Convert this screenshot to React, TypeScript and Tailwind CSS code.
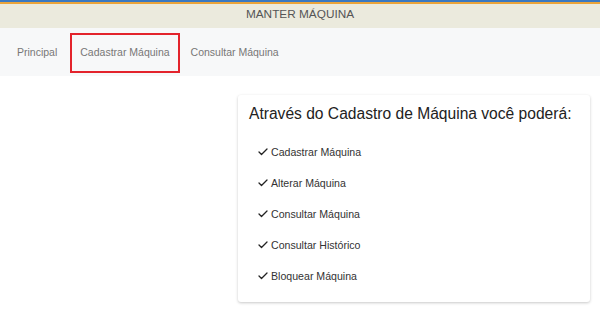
import { Check } from 'lucide-react';

const items = [
  'Cadastrar Máquina',
  'Alterar Máquina',
  'Consultar Máquina',
  'Consultar Histórico',
  'Bloquear Máquina',
];

export default function App() {
  return (
    <div className="w-[600px] h-[312px] bg-white overflow-hidden font-['Liberation_Sans',Arial,sans-serif]">
      {/* top stripes */}
      <div className="h-[2px] bg-[#3a78c0]" />
      <div className="h-[2px] bg-[#eaa43a]" />

      {/* title bar */}
      <div className="h-[24px] bg-[#ebeadd] flex items-center justify-center">
        <span className="text-[11.8px] text-[#555] -mt-[2px]">MANTER MÁQUINA</span>
      </div>

      {/* nav */}
      <nav className="h-[48px] bg-[#f7f8f9] flex items-center pl-[6px] pt-[2px]">
        <a className="px-[9px] py-[12px] text-[10.5px] text-[#777] border-2 border-transparent">Principal</a>
        <a className="ml-[2px] px-[8px] py-[12px] text-[10.5px] text-[#777] border-2 border-[#e3232c] h-[40px] flex items-center">
          Cadastrar Máquina
        </a>
        <a className="px-[9px] py-[12px] text-[10.5px] text-[#777] border-2 border-transparent">Consultar Máquina</a>
      </nav>

      {/* content */}
      <div className="flex justify-end pr-[10px] pt-[19px]">
        <div className="w-[352px] h-[207px] bg-white rounded-[3px] shadow-[0_1px_3px_rgba(0,0,0,0.22)] pl-[11px] pt-[9px]">
          <h2 className="text-[15.6px] text-[#222] leading-[20px]">Através do Cadastro de Máquina você poderá:</h2>
          <ul className="mt-[20px] pl-[8px] flex flex-col gap-[15px]">
            {items.map(item => (
              <li key={item} className="flex items-center gap-[2px] text-[10.6px] text-[#333] leading-[16px]">
                <Check size={12} strokeWidth={2.6} className="text-[#222]" />
                {item}
              </li>
            ))}
          </ul>
        </div>
      </div>
    </div>
  );
}
